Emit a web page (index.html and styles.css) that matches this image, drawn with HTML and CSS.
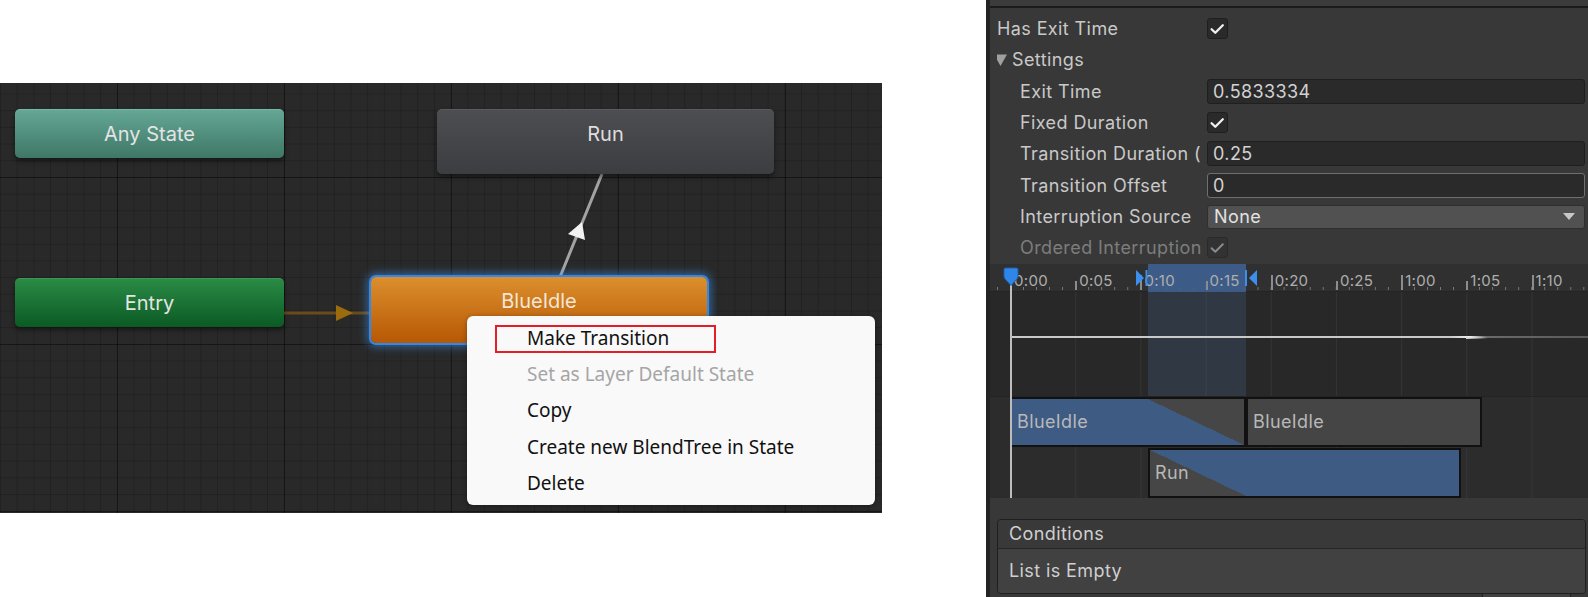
FILE: index.html
```html
<!DOCTYPE html>
<html>
<head>
<meta charset="utf-8">
<title>Animator</title>
<link rel="stylesheet" href="styles.css">
</head>
<body>
<div class="page">
  <div class="canvas">
    <svg class="wires" width="882" height="430" viewBox="0 0 882 430">
      <line x1="284" y1="230" x2="371" y2="230" stroke="#6a4c1c" stroke-width="3"/>
      <polygon points="336,222 353,230 336,238" fill="#9c6b0e"/>
      <line x1="560" y1="194" x2="602" y2="91" stroke="#a3a3a3" stroke-width="3"/>
      <polygon points="582,139 585,157 568,151" fill="#f2f2f2"/>
    </svg>
    <div class="node node-any">Any State</div>
    <div class="node node-entry">Entry</div>
    <div class="node node-run">Run</div>
    <div class="node node-idle">BlueIdle</div>
    <div class="menu">
      <div class="menu-item">Make Transition<span class="mark"></span></div>
      <div class="menu-item disabled">Set as Layer Default State</div>
      <div class="menu-item">Copy</div>
      <div class="menu-item">Create new BlendTree in State</div>
      <div class="menu-item">Delete</div>
    </div>
  </div>

  <div class="inspector">
    <div class="insp-top"></div>
    <div class="props">
      <div class="row">
        <span class="label">Has Exit Time</span>
        <span class="check"><svg viewBox="0 0 21 21" width="21" height="21"><path d="M4.6 11.2 L8.3 14.8 L15.8 7.2" fill="none" stroke="#f0f0f0" stroke-width="2.3" stroke-linecap="round" stroke-linejoin="round"/></svg></span>
      </div>
      <div class="row">
        <span class="label foldout"><svg class="tri" viewBox="0 0 13 12" width="13" height="12"><polygon points="0,0.5 13,0.5 6.5,12" fill="#a0a0a0"/></svg>Settings</span>
      </div>
      <div class="row nested">
        <span class="label">Exit Time</span>
        <span class="field">0.5833334</span>
      </div>
      <div class="row nested">
        <span class="label">Fixed Duration</span>
        <span class="check"><svg viewBox="0 0 21 21" width="21" height="21"><path d="M4.6 11.2 L8.3 14.8 L15.8 7.2" fill="none" stroke="#f0f0f0" stroke-width="2.3" stroke-linecap="round" stroke-linejoin="round"/></svg></span>
      </div>
      <div class="row nested">
        <span class="label">Transition Duration (</span>
        <span class="field">0.25</span>
      </div>
      <div class="row nested">
        <span class="label">Transition Offset</span>
        <span class="field hover">0</span>
      </div>
      <div class="row nested">
        <span class="label">Interruption Source</span>
        <span class="dropdown">None<span class="dd-arrow"></span></span>
      </div>
      <div class="row nested dim">
        <span class="label">Ordered Interruption</span>
        <span class="check dim-check"><svg viewBox="0 0 21 21" width="21" height="21"><path d="M4.6 11.2 L8.3 14.8 L15.8 7.2" fill="none" stroke="#8a8a8a" stroke-width="2" stroke-linecap="round" stroke-linejoin="round"/></svg></span>
      </div>
    </div>

    <div class="timeline">
      <div class="highlight"></div>
      <div class="ruler">
        <div class="rcell tall"><span class="tk"></span><span class="rl">0:00</span></div>
        <div class="rcell"><span class="tk"></span><span class="rl">0:05</span></div>
        <div class="rcell tall"><span class="tk"></span><span class="rl">0:10</span></div>
        <div class="rcell"><span class="tk"></span><span class="rl">0:15</span></div>
        <div class="rcell tall"><span class="tk"></span><span class="rl">0:20</span></div>
        <div class="rcell"><span class="tk"></span><span class="rl">0:25</span></div>
        <div class="rcell tall"><span class="tk"></span><span class="rl">1:00</span></div>
        <div class="rcell"><span class="tk"></span><span class="rl">1:05</span></div>
        <div class="rcell tall"><span class="tk"></span><span class="rl">1:10</span></div>
      </div>
      <div class="curve">
        <div class="curve-line"><span class="curve-tip"></span></div>
      </div>
      <div class="clips">
        <div class="clip-row first">
          <div class="clip blue fade-out" style="margin-left:20px;width:236px"><span class="clip-name">BlueIdle</span></div>
          <div class="clip grey" style="width:236px"><span class="clip-name">BlueIdle</span></div>
        </div>
        <div class="clip-row">
          <div class="clip blue fade-in" style="margin-left:158px;width:313px"><span class="clip-name">Run</span></div>
        </div>
      </div>
      <div class="playhead"></div>
      <svg class="pin" viewBox="0 0 20 20" width="20" height="20"><path d="M3 2.5 Q3 1 4.5 1 L15.5 1 Q17 1 17 2.5 L17 9 Q17 11 15.5 12.5 L10 18.5 L4.5 12.5 Q3 11 3 9 Z" fill="#2f86e6" stroke="#1b5fae" stroke-width="1"/></svg>
      <svg class="mk-start" viewBox="0 0 14 18" width="14" height="18"><path d="M1 1 L9 9 L1 17 Z" fill="#3a8ff0"/><rect x="10.5" y="1" width="2" height="16" fill="#3a8ff0"/></svg>
      <svg class="mk-end" viewBox="0 0 14 18" width="14" height="18"><rect x="1" y="1" width="2" height="16" fill="#3a8ff0"/><path d="M13 1 L5 9 L13 17 Z" fill="#3a8ff0"/></svg>
    </div>

    <div class="conditions">
      <div class="cond-head">Conditions</div>
      <div class="cond-body">List is Empty</div>
    </div>
    <div class="cond-foot"></div>
  </div>
</div>
</body>
</html>
```

FILE: styles.css
```css
* { box-sizing: border-box; }

html, body {
  margin: 0;
  padding: 0;
  background: #ffffff;
}

body {
  width: 1588px;
  height: 597px;
  overflow: hidden;
  font-family: Inter, "Noto Sans", sans-serif;
}

.page {
  display: flex;
  align-items: flex-start;
  gap: 104px;
  width: 1588px;
  height: 597px;
}

/* ---------- Animator canvas ---------- */
.canvas {
  position: relative;
  flex: 0 0 882px;
  min-width: 0;
  height: 430px;
  margin-top: 83px;
  overflow: hidden;
  background-color: #292929;
  background-image:
    linear-gradient(to right, rgba(0,0,0,0.38) 1px, transparent 1px),
    linear-gradient(to bottom, rgba(0,0,0,0.38) 1px, transparent 1px),
    linear-gradient(to right, rgba(0,0,0,0.17) 1px, transparent 1px),
    linear-gradient(to bottom, rgba(0,0,0,0.17) 1px, transparent 1px);
  background-size: 167px 167px, 167px 167px, 16.7px 16.7px, 16.7px 16.7px;
  background-position: 117px 0, 0 94px, 0 0, 0 10.5px;
}

.wires {
  position: absolute;
  left: 0;
  top: 0;
}

.node {
  position: absolute;
  border-radius: 5px;
  color: #e4e4e4;
  font-size: 20px;
  line-height: 24px;
  padding-top: 12px;
  text-align: center;
  box-shadow: 0 3px 5px rgba(0,0,0,0.45);
}

.node-any {
  left: 15px; top: 26px; width: 269px; height: 49px;
  background: linear-gradient(#64a794, #3f7767);
  border-top: 1px solid #77b8a6;
}

.node-entry {
  left: 15px; top: 195px; width: 269px; height: 49px;
  background: linear-gradient(#2a8b45, #0b5a24);
  border-top: 1px solid #3c9a56;
}

.node-run {
  left: 437px; top: 26px; width: 337px; height: 65px;
  background: linear-gradient(#4d4e51, #3c3d40);
  border-top: 1px solid #5a5b5e;
  color: #dedede;
}

.node-idle {
  left: 371px; top: 194px; width: 336px; height: 66px;
  background: linear-gradient(#dc8f2d, #b75804);
  color: #f3e6d6;
  box-shadow: 0 0 0 2px #3189ea, 0 0 8px 4px rgba(60,150,250,0.55);
}

.menu {
  position: absolute;
  left: 467px;
  top: 233px;
  width: 408px;
  padding: 4px 0;
  background: #f9f9f9;
  border-radius: 6px;
  box-shadow: 0 1px 5px rgba(0,0,0,0.35);
  font-family: "Noto Sans", "Open Sans", sans-serif;
  font-size: 19px;
  color: #111111;
}

.menu-item {
  position: relative;
  height: 36.2px;
  line-height: 36px;
  padding-left: 60px;
  white-space: nowrap;
}

.menu-item.disabled {
  color: #a5a5a5;
}

.mark {
  position: absolute;
  left: 28px;
  top: 5px;
  width: 221px;
  height: 28px;
  border: 2px solid #e41e26;
}

/* ---------- Inspector ---------- */
.inspector {
  flex: 0 0 602px;
  min-width: 0;
  width: 602px;
  height: 597px;
  overflow: hidden;
  background: #383838;
  border-left: 4px solid #232323;
  font-size: 18px;
  letter-spacing: 0.4px;
  color: #c9c9c9;
  display: flex;
  flex-direction: column;
}

.insp-top {
  flex: none;
  height: 8px;
  background: #3b3b3b;
  border-bottom: 2px solid #1b1b1b;
}

.props {
  flex: none;
  padding: 5px 3px 0 7px;
}

.row {
  display: flex;
  align-items: center;
  height: 31.33px;
}

.label {
  flex: 0 0 210px;
  white-space: nowrap;
  overflow: hidden;
}

.nested .label {
  padding-left: 23px;
}

.foldout {
  display: flex;
  align-items: center;
}

.tri {
  flex: none;
  margin-left: -3px;
  margin-right: 5px;
}

.check {
  flex: none;
  width: 21px;
  height: 21px;
  background: #2a2a2a;
  border: 1px solid #1f1f1f;
  border-radius: 3px;
  display: flex;
  align-items: center;
  justify-content: center;
}

.check svg {
  flex: none;
}

.dim .label {
  color: #7d7d7d;
}

.dim-check {
  background: #323232;
  border-color: #2a2a2a;
}

.field {
  flex: 1;
  min-width: 0;
  height: 25px;
  background: #2a2a2a;
  border: 1px solid #1f1f1f;
  border-radius: 3px;
  padding-left: 5px;
  line-height: 23px;
  color: #d2d2d2;
}

.field.hover {
  border-color: #6e6e6e;
}

.dropdown {
  flex: 1;
  min-width: 0;
  height: 24px;
  display: flex;
  align-items: center;
  justify-content: space-between;
  background: #515151;
  border: 1px solid #2f2f2f;
  border-radius: 3px;
  padding: 0 9px 0 6px;
  color: #e2e2e2;
}

.dd-arrow {
  width: 0;
  height: 0;
  border-left: 6px solid transparent;
  border-right: 6px solid transparent;
  border-top: 7px solid #c8c8c8;
}

/* ---------- Timeline ---------- */
.timeline {
  position: relative;
  flex: none;
  height: 234px;
  min-width: 0;
  overflow: hidden;
  background: #2a2a2a;
}

.ruler {
  height: 28px;
  display: flex;
  overflow: hidden;
  padding-left: 20px;
  background-color: #303030;
  background-image: linear-gradient(to right, #7a7a7a 1px, transparent 1px);
  background-size: 13.04px 3px;
  background-repeat: repeat-x;
  background-position: 20px 23px;
  border-bottom: 1px solid #242424;
}

.rcell {
  flex: 0 0 65.2px;
  display: flex;
  align-items: flex-end;
  padding-bottom: 1px;
  position: relative;
  z-index: 2;
}

.tk {
  flex: none;
  width: 2px;
  height: 9px;
  background: #8c8c8c;
}

.rcell.tall .tk {
  height: 15px;
}

.rl {
  margin-left: 2px;
  font-size: 15px;
  letter-spacing: 0.3px;
  line-height: 18px;
  color: #aeaeae;
}

.curve {
  height: 104px;
  padding-top: 44px;
  background-color: #282828;
  background-image: linear-gradient(to right, #343434 1px, transparent 1px);
  background-size: 65.2px 100%;
  background-position: 20px 0;
}

.curve-line {
  position: relative;
  z-index: 2;
  margin-left: 20px;
  height: 2px;
  background: linear-gradient(to right, #c9c9c9 0, #c9c9c9 440px, #f2f2f2 460px, #6a6a6a 476px, #5a5a5a 100%);
}

.curve-tip {
  position: absolute;
  left: 456px;
  top: 1px;
  width: 22px;
  height: 2px;
  background: linear-gradient(to right, #dcdcdc, rgba(200,200,200,0));
}

.clips {
  height: 102px;
  border-top: 1px solid #232323;
  background-color: #2c2c2c;
  background-image: linear-gradient(to right, #363636 1px, transparent 1px);
  background-size: 65.2px 100%;
  background-position: 20px 0;
}

.clip-row {
  display: flex;
  height: 50px;
}

.clip-row.first {
  height: 51px;
}

.clip {
  position: relative;
  z-index: 2;
  flex: none;
  height: 50px;
  border: 2px solid #111111;
  padding-left: 5px;
  line-height: 46px;
  color: #b8b8b8;
  font-size: 18px;
  overflow: hidden;
}

.clip-name {
  position: relative;
  z-index: 1;
}

.clip.blue {
  background: #3e5b83;
}

.clip.grey {
  background: #454545;
}

.fade-out::before {
  content: "";
  position: absolute;
  top: 0;
  bottom: 0;
  left: 136px;
  right: 0;
  background: linear-gradient(to top right, transparent 50%, #464646 50%);
}

.fade-in::before {
  content: "";
  position: absolute;
  top: 0;
  bottom: 0;
  left: 0;
  width: 96px;
  background: linear-gradient(to top right, #464646 50%, transparent 50%);
}

.highlight {
  position: absolute;
  z-index: 1;
  left: 158px;
  top: 0;
  width: 98px;
  height: 132px;
  background: linear-gradient(to bottom, rgba(62,95,142,0.92) 0, rgba(62,95,142,0.92) 28px, rgba(80,120,180,0.2) 28px);
}

.playhead {
  position: absolute;
  z-index: 3;
  left: 20px;
  top: 18px;
  bottom: 0;
  width: 2px;
  background: #bdbdbd;
}

.pin {
  position: absolute;
  z-index: 4;
  left: 11px;
  top: 3px;
}

.mk-start {
  position: absolute;
  z-index: 4;
  left: 145px;
  top: 5px;
}

.mk-end {
  position: absolute;
  z-index: 4;
  left: 254px;
  top: 5px;
}

/* ---------- Conditions ---------- */
.conditions {
  flex: none;
  margin: 21px 2px 0 7px;
  border: 1px solid #1f1f1f;
  border-radius: 4px;
  overflow: hidden;
}

.cond-head {
  height: 29px;
  line-height: 28px;
  background: #393939;
  padding-left: 11px;
  border-bottom: 1px solid #262626;
  color: #d0d0d0;
}

.cond-body {
  height: 44px;
  line-height: 43px;
  background: #414141;
  padding-left: 11px;
  color: #cfcfcf;
}

.cond-foot {
  flex: none;
  margin-left: 492px;
  width: 89px;
  height: 8px;
  background: #414141;
  border: 1px solid #1f1f1f;
  border-top: none;
}
```
